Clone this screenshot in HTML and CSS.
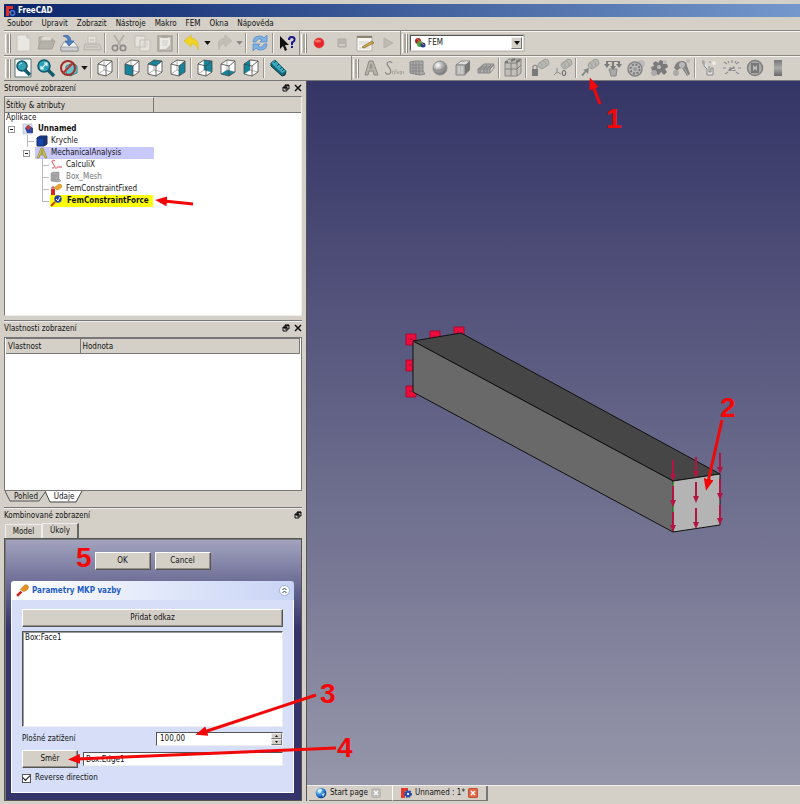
FILE: index.html
```html
<!DOCTYPE html>
<html lang="cs">
<head>
<meta charset="utf-8">
<title>FreeCAD</title>
<link rel="stylesheet" href="styles.css">
</head>
<body>
<svg class="defs" aria-hidden="true">
  <defs>
    <radialGradient id="ball" cx=".35" cy=".3" r=".7"><stop offset="0" stop-color="#fff"/><stop offset=".5" stop-color="#aaa"/><stop offset="1" stop-color="#777"/></radialGradient>
    <radialGradient id="globe" cx=".35" cy=".3" r=".7"><stop offset="0" stop-color="#d8f2ff"/><stop offset=".5" stop-color="#3b91df"/><stop offset="1" stop-color="#0c3b94"/></radialGradient>
    <linearGradient id="ramp" x1="0" y1="0" x2="0" y2="1"><stop offset="0" stop-color="#777"/><stop offset=".5" stop-color="#aaa"/><stop offset="1" stop-color="#686868"/></linearGradient>
    <marker id="tip" viewBox="0 0 12 10" refX="3" refY="5" markerWidth="12" markerHeight="10" markerUnits="userSpaceOnUse" orient="auto"><path d="M12 5L0 0V10Z" fill="#f20808"/></marker>
    <symbol id="wire" viewBox="0 0 20 20"><path d="M3 6L9 2L17 3V14L11 18L3 16Z" fill="#fff"/><path d="M9 2V12L3 16M9 12L17 14" stroke="#999" stroke-width=".8" fill="none"/></symbol>
    <symbol id="edges" viewBox="0 0 20 20"><path d="M3 6L9 2L17 3V14L11 18L3 16ZM3 6L11 8L17 3M11 8V18" stroke="#444" stroke-width=".8" fill="none" stroke-linejoin="round"/></symbol>
    <symbol id="roller" viewBox="0 0 20 20"><path d="M9 5L15 1Q19 1 19 5Q19 7 17 8L12 11Q8 10 8 7Z" fill="#b8b8b3" stroke="#95938f" stroke-width=".8"/><path d="M10 5Q13 6 12 10M13 3Q16 4 16 8" stroke="#999" fill="none" stroke-width=".7"/></symbol>
    <symbol id="float" viewBox="0 0 8 8"><path d="M3 1H7V5H3ZM1 3H5V7H1Z" fill="#d4d0c8" stroke="#111"/><path d="M3 1.5H7M1 3.5H5" stroke="#111" stroke-width="1.4"/></symbol>
    <symbol id="close" viewBox="0 0 8 8"><path d="M1 1L7 7M7 1L1 7" stroke="#111" stroke-width="1.5"/></symbol>
    <symbol id="pin" viewBox="0 0 12 12"><path d="M1 11L5 7" stroke="#c8241c" stroke-width="2.4"/><path d="M4 5L8 1Q11 0 11.500 3Q11 6 7 7Z" fill="#e99223" stroke="#c27a1d" stroke-width=".6"/></symbol>
  </defs>
</svg>
<div class="app">
  <header>
    <div class="titlebar">
      <svg width="12" height="12" viewBox="0 0 12 12"><path d="M2 1H9V4H5V6H7V8H5V11H2Z" fill="#e0302d"/><circle cx="8.500" cy="8" r="2.200" fill="none" stroke="#4b76ce" stroke-width="1.500"/></svg>
      <h1>FreeCAD</h1>
    </div>
    <nav class="menubar">
      <button>Soubor</button><button>Upravit</button><button>Zobrazit</button><button>Nástroje</button><button>Makro</button><button>FEM</button><button>Okna</button><button>Nápověda</button>
    </nav>
    <div class="toolrow">
      <div class="toolbar">
        <span class="grip"></span>
        <button class="tool" aria-label="Nový"><svg viewBox="0 0 20 20"><path d="M4 2H14L17 5V18H4Z" fill="#e9e7e1" stroke="#c4c1b9" stroke-width=".8"/><path d="M14 2V5H17" fill="none" stroke="#bbb"/></svg></button>
        <button class="tool" aria-label="Otevřít"><svg viewBox="0 0 20 20"><path d="M3 15V4H8L10 6H17V9" fill="#b8b6ae" stroke="#aaa79f"/><path d="M6 4H15V10H5Z" fill="#dedbd4"/><path d="M5 8H19L16 16H2Z" fill="#b5b2aa" stroke="#a4a198"/></svg></button>
        <button class="tool" aria-label="Uložit"><svg viewBox="0 0 20 20"><path d="M5 9H15L19 14V18H2V14Z" fill="#eeeeec" stroke="#85888b" stroke-width=".8"/><path d="M2 14H19V18H2Z" fill="#cbcdd0" stroke="#85888b" stroke-width=".6"/><path d="M4 3Q11 0 12 8H15L10 13L6 8H9Q9 4 4 3Z" fill="#4d83c6" stroke="#2d5691" stroke-width=".6"/></svg></button>
        <button class="tool" aria-label="Tisk"><svg viewBox="0 0 20 20"><path d="M6 3H14V10H6Z" fill="#e2dfd8" stroke="#c4c1b9"/><path d="M3 11H17L19 14V17H2V14Z" fill="#cfccc5" stroke="#b5b2aa"/><path d="M4 14H16M8 7H12" stroke="#b8b5ad" fill="none"/></svg></button>
        <span class="sep"></span>
        <button class="tool" aria-label="Vyjmout"><svg viewBox="0 0 20 20"><path d="M5 2L12 13M15 2L8 13" stroke="#b5b2aa" stroke-width="2"/><circle cx="6" cy="15" r="2.700" fill="none" stroke="#8d8b86" stroke-width="1.700"/><circle cx="14" cy="15" r="2.700" fill="none" stroke="#8d8b86" stroke-width="1.700"/></svg></button>
        <button class="tool" aria-label="Kopírovat"><svg viewBox="0 0 20 20"><path d="M3 3H13V14H3ZM8 7H18V18H8Z" fill="#e5e2dc" stroke="#c2bfb8"/><path d="M10 10H16M10 12H16M10 14H15" stroke="#d2cfc9"/></svg></button>
        <button class="tool" aria-label="Vložit"><svg viewBox="0 0 20 20"><path d="M3 3H17V18H3Z" fill="#c5c2ba" stroke="#a4a199" stroke-width="1.500"/><path d="M5 5H15V16H5Z" fill="#ebe9e4"/><path d="M7 2H13V5H7Z" fill="#aaa79f"/><path d="M7 8H13M7 10H13M7 12H12" stroke="#d0cdc6"/><path d="M11 16L15 12V16Z" fill="#bbb"/></svg></button>
        <span class="sep"></span>
        <button class="tool" aria-label="Zpět"><svg viewBox="0 0 20 20"><path d="M2 8L9 2V5Q18 6 16 17Q15 10 9 11V14Z" fill="#f1d522" stroke="#d9bb28" stroke-width=".7"/></svg></button>
        <button class="drop" aria-label="Kroky zpět"><svg viewBox="0 0 8 5"><path d="M0 0H8L4 5Z"/></svg></button>
        <button class="tool" aria-label="Znovu"><svg viewBox="0 0 20 20"><path d="M18 8L11 2V5Q2 6 5 17Q6 10 11 11V14Z" fill="#c1beb6" stroke="#b8b5ad" stroke-width=".7"/></svg></button>
        <button class="drop off" aria-label="Kroky vpřed"><svg viewBox="0 0 8 5"><path d="M0 0H8L4 5Z"/></svg></button>
        <span class="sep"></span>
        <button class="tool" aria-label="Obnovit"><svg viewBox="0 0 20 20"><path d="M3 9Q3 3 10 3Q13 3 14 5L17 2V9H10L12 7Q8 4 6 9ZM17 11Q17 17 10 17Q7 17 6 15L3 18V11H10L8 13Q12 16 14 11Z" fill="#7fb2e4" stroke="#4c84c2" stroke-width=".7"/></svg></button>
        <span class="sep"></span>
        <button class="tool" aria-label="Co je to?"><svg viewBox="0 0 20 20"><path d="M3 3V16L6 13L8 18L10 17L8 12H12Z" fill="#111"/><path d="M12 7Q12 4 14.500 4Q18 4 17.500 7Q17 9 15 9.500V12M15 13V15" fill="none" stroke="#16168b" stroke-width="2"/></svg></button>
      </div>
      <div class="toolbar">
        <span class="grip"></span>
        <button class="tool" aria-label="Nahrát makro"><svg viewBox="0 0 20 20"><circle cx="10" cy="10" r="5" fill="#e52525" stroke="#d04444" stroke-width=".6"/><ellipse cx="9" cy="8" rx="3" ry="1.500" fill="#f36b61"/></svg></button>
        <button class="tool" aria-label="Zastavit"><svg viewBox="0 0 20 20"><path d="M6 6H14V14H6Z" fill="#b8b5ae" stroke="#b0ada6"/><path d="M7 12H13" stroke="#ddd"/></svg></button>
        <button class="tool" aria-label="Makra"><svg viewBox="0 0 20 20"><path d="M2 3H17V18H2Z" fill="#f6f5ef" stroke="#b1afa8"/><path d="M2 3H17V5H2Z" fill="#8b826d"/><path d="M4 9H14M4 11H12M4 15H15" stroke="#d0d0cc"/><path d="M7 14L17 8L19 10L9 15Z" fill="#d5a540" stroke="#705d32" stroke-width=".6"/></svg></button>
        <button class="tool" aria-label="Spustit"><svg viewBox="0 0 20 20"><path d="M6 5L15 10L6 15Z" fill="#bebbb3" stroke="#b5b2aa"/></svg></button>
      </div>
      <div class="toolbar last">
        <span class="grip"></span>
        <div class="combo">
          <svg width="12" height="12" viewBox="0 0 12 12"><circle cx="4" cy="4" r="3" fill="#a72b25"/><circle cx="6" cy="7" r="3" fill="#48a536"/><circle cx="9" cy="8" r="2.500" fill="#233e91"/><path d="M3 2L10 8" stroke="#d67b54"/></svg>
          <select aria-label="Pracovní prostředí"><option>FEM</option></select>
          <span class="arrow"></span>
        </div>
      </div>
    </div>
    <div class="toolrow">
      <div class="toolbar views">
        <span class="grip"></span>
        <button class="tool" aria-label="Zobrazit vše"><svg viewBox="0 0 20 20"><path d="M2 1H18V19H2Z" fill="#fff" stroke="#57777b"/><path d="M12 12L17 17" stroke="#155b6e" stroke-width="3.500"/><circle cx="9" cy="8" r="5" fill="#36a1b4" stroke="#11586b" stroke-width="1.500"/><path d="M6 7Q7 5 9 5" stroke="#baf1f2" fill="none"/></svg></button>
        <button class="tool" aria-label="Zobrazit výběr"><svg viewBox="0 0 20 20"><path d="M12 12L18 18" stroke="#155b6e" stroke-width="3.500"/><circle cx="8" cy="8" r="6" fill="#2fa0b6" stroke="#11586b" stroke-width="1.500"/><path d="M5 11L11 5M8 5H11V8M5 8V11H8" stroke="#e9ffff" fill="none" stroke-width="1.200"/></svg></button>
        <button class="tool" aria-label="Styl zobrazení"><svg viewBox="0 0 20 20"><path d="M7 8L14 5L18 8V15L11 18L7 15Z" fill="#65c3cc" stroke="#38818b"/><circle cx="9" cy="10" r="7" fill="none" stroke="#9c302a" stroke-width="2"/><path d="M4 15L14 5" stroke="#b9332b" stroke-width="2"/></svg></button>
        <button class="drop" aria-label="Další styly"><svg viewBox="0 0 8 5"><path d="M0 0H8L4 5Z"/></svg></button>
        <span class="sep"></span>
        <button class="tool" aria-label="Axonometrie"><svg viewBox="0 0 20 20"><use href="#wire"/><use href="#edges"/></svg></button>
        <span class="sep"></span>
        <button class="tool" aria-label="Zepředu"><svg viewBox="0 0 20 20"><use href="#wire"/><path class="face" d="M3 6L11 8V18L3 16Z"/><use href="#edges"/></svg></button>
        <button class="tool" aria-label="Shora"><svg viewBox="0 0 20 20"><use href="#wire"/><path class="face" d="M3 6L9 2L17 3L11 8Z"/><use href="#edges"/></svg></button>
        <button class="tool" aria-label="Zprava"><svg viewBox="0 0 20 20"><use href="#wire"/><path class="face" d="M11 8L17 3V14L11 18Z"/><use href="#edges"/></svg></button>
        <span class="sep"></span>
        <button class="tool" aria-label="Zezadu"><svg viewBox="0 0 20 20"><use href="#wire"/><path class="face" d="M9 2L17 3V14L9 12Z"/><use href="#edges"/></svg></button>
        <button class="tool" aria-label="Zdola"><svg viewBox="0 0 20 20"><use href="#wire"/><path class="face" d="M3 16L9 12L17 14L11 18Z"/><use href="#edges"/></svg></button>
        <button class="tool" aria-label="Zleva"><svg viewBox="0 0 20 20"><use href="#wire"/><path class="face" d="M3 6L9 2V12L3 16Z"/><use href="#edges"/></svg></button>
        <span class="sep"></span>
        <button class="tool" aria-label="Měřit"><svg viewBox="0 0 20 20"><path d="M3 5L7 2L18 13L17 17L14 18L3 8Z" fill="#13687b" stroke="#083743"/><path d="M3 5L7 2L18 13L14 15Z" fill="#36a9bc"/><path d="M6 5L8 3M9 8L11 6M12 11L14 9M14 13L16 11" stroke="#0b4553"/></svg></button>
      </div>
      <div class="toolbar last">
        <span class="grip"></span>
        <button class="tool" aria-label="Analýza"><svg viewBox="0 0 20 20"><path d="M4 17L8 3H12L17 17H13L12 13H8L7 17ZM9 10H11L10 6Z" fill="#b5b2aa" stroke="#8e8c86"/></svg></button>
        <button class="tool" aria-label="Řešič"><svg viewBox="0 0 20 20"><path d="M8 5Q7 3 4.500 4Q2 5 4 8L6 10.500Q8 15 5 16Q2 17 1.500 14" fill="none" stroke="#8d8b86" stroke-width="1.300"/><path d="M8.500 13H10.500V16H8.500ZM12 11V16M13 13L14 16L15 13M18 16H16V13.500H18V15H16M19.500 16V13" fill="none" stroke="#a09d96" stroke-width=".7"/></svg></button>
        <button class="tool" aria-label="Síť"><svg viewBox="0 0 20 20"><path d="M3 4L8 3H16V13L18 16L13 17L3 15Z" fill="#aaa" stroke="#888"/><path d="M3 7H16M3 10H16M3 13H16M6 4V16M9 4V17M12 4V17" stroke="#828282" stroke-width=".8"/></svg></button>
        <button class="tool" aria-label="Materiál"><svg viewBox="0 0 20 20"><circle cx="10" cy="10" r="7" fill="url(#ball)" stroke="#919191"/><path d="M3 11Q10 15 17 8" fill="none" stroke="#888"/></svg></button>
        <button class="tool" aria-label="Uzly"><svg viewBox="0 0 20 20"><path d="M3 7L8 3H17L13 7Z" fill="#ddd" stroke="#888"/><path d="M3 7H12V17H3Z" fill="#b8b8b8" stroke="#888"/><path d="M12 7L17 3V12L12 17Z" fill="#777"/><path d="M6 8V16M9 8V16M10 6L14 3" stroke="#ddd"/></svg></button>
        <button class="tool" aria-label="Skořepina"><svg viewBox="0 0 20 20"><path d="M2 11L8 6H18L14 11V15H2Z" fill="#aaa" stroke="#888"/><path d="M2 11H14L18 7V10L14 15M5 9H16M7 7L4 11V15M11 7L8 11V15M15 7L11 11V15" fill="none" stroke="#828282" stroke-width=".8"/></svg></button>
        <span class="sep"></span>
        <button class="tool" aria-label="Skupina uzlů"><svg viewBox="0 0 20 20"><path d="M2 4L6 1H18V15L14 18H2Z" fill="#c1bfb8" stroke="#888"/><path d="M2 5H14L18 1M14 5V18M8 5V18M2 11H14L18 7" fill="none" stroke="#808080"/><path d="M2 4H5M8 3L12 1M13 4L17 2" stroke="#777" stroke-width="2"/></svg></button>
        <span class="sep"></span>
        <button class="tool" aria-label="Pevná vazba"><svg viewBox="0 0 20 20"><use href="#roller"/><path d="M2 11H8V18H2Z" fill="#797979"/><path d="M3 11V8Q5 6 7 8V11" fill="none" stroke="#777"/></svg></button>
        <button class="tool" aria-label="Posunutí"><svg viewBox="0 0 20 20"><use href="#roller"/><path d="M4 10V14L1 17M4 14L8 16" fill="none" stroke="#888"/><ellipse cx="11" cy="15" rx="1.700" ry="2.500" fill="none" stroke="#777" stroke-width="1.200"/></svg></button>
        <span class="sep"></span>
        <button class="tool" aria-label="Síla"><svg viewBox="0 0 20 20"><use href="#roller"/><path d="M1 17L5 13L3 12L9 10L8 16L6 14L3 18Z" fill="#858585"/></svg></button>
        <button class="tool" aria-label="Tlak"><svg viewBox="0 0 20 20"><path d="M6 11H14L13 18H8Z" fill="#aaa" stroke="#888"/><path d="M3 3V6H1L4 10L7 6H5V4H9V8H7L10 12L13 8H11V4H15V6H13L16 10L19 6H17V3Z" fill="#7b7b7b"/></svg></button>
        <button class="tool" aria-label="Ložisko"><svg viewBox="0 0 20 20"><circle cx="15" cy="6" r="4" fill="#bbb"/><circle cx="9" cy="11" r="7" fill="#bbb" stroke="#858585" stroke-width="1.500"/><circle cx="9" cy="11" r="4.500" fill="none" stroke="#777" stroke-width="2" stroke-dasharray="2 1.500"/><circle cx="9" cy="11" r="2" fill="#999"/></svg></button>
        <button class="tool" aria-label="Ozubené kolo"><svg viewBox="0 0 20 20"><path d="M4 5L7 3L9 5L11 2L14 3V6L18 6L19 9L16 11L18 14L15 17L12 14L10 17L7 16V13L3 13L2 9L5 8Z" fill="#7b7b7b"/><circle cx="10" cy="9" r="2" fill="#bbb"/><circle cx="5" cy="15" r="3" fill="#aaa"/><circle cx="16" cy="4" r="2" fill="#bbb"/></svg></button>
        <button class="tool" aria-label="Řemenice"><svg viewBox="0 0 20 20"><path d="M2 10Q4 2 11 3Q15 4 15 8L18 16L15 18L10 10Q7 10 5 13Z" fill="#818181"/><circle cx="10" cy="7" r="3" fill="#b8b8b8"/><circle cx="4" cy="15" r="3" fill="#aaa"/><circle cx="16" cy="3" r="2" fill="#bbb"/><path d="M12 10L16 17" stroke="#aaa"/></svg></button>
        <span class="sep"></span>
        <button class="tool" aria-label="Příčky"><svg viewBox="0 0 20 20"><path d="M5 5V8L8 11V17H14V10H12V14H10V8" fill="#ddd" stroke="#888"/><path d="M3 4H6M4 2V6M10 4H12" stroke="#999"/><circle cx="15" cy="5" r="2" fill="#eceae5"/></svg></button>
        <button class="tool" aria-label="Výpočet"><svg viewBox="0 0 20 20"><path d="M2 4L5 6M10 2V5M17 4L14 6M1 10H4M16 10H19M3 16L6 14M17 16L14 14M6 3L7 5M14 3L13 5" stroke="#909090" stroke-width="1.200"/><path d="M6 13L8 9L10 10L12 8L14 13Z" fill="#888"/><path d="M9 12L14 11" stroke="#ddd"/></svg></button>
        <button class="tool" aria-label="Výsledky"><svg viewBox="0 0 20 20"><circle cx="10" cy="10" r="7.500" fill="#aaa" stroke="#808080" stroke-width="1.500"/><path d="M6 5H14V15H6Z" fill="#787878"/><path d="M8 7L10 9L12 7V13L10 11L8 13Z" fill="#bbb"/></svg></button>
        <button class="tool" aria-label="Stupnice"><svg viewBox="0 0 20 20"><path d="M6 2H14V18H6Z" fill="url(#ramp)"/></svg></button>
      </div>
    </div>
  </header>
  <div class="main">
    <aside class="side">
      <section class="dock tree-dock">
        <div class="dock-title"><h2>Stromové zobrazení</h2><button aria-label="Uvolnit"><svg><use href="#float"/></svg></button><button aria-label="Zavřít"><svg><use href="#close"/></svg></button></div>
        <div class="tree">
          <div class="tree-head"><span>Štítky &amp; atributy</span></div>
          <ul>
            <li class="root">Aplikace</li>
            <li class="l1"><span class="toggle"></span><svg width="12" height="12" viewBox="0 0 12 12"><path d="M1 1H10V11H1Z" fill="#dce0ee" stroke="#9ba4ba" stroke-width=".5"/><path d="M3 5L6 2L11 5V10H5Z" fill="#304aa2"/><path d="M4 4L7 2L9 5L6 7Z" fill="#cf3a36"/></svg><b>Unnamed</b></li>
            <li class="l2"><svg width="12" height="12" viewBox="0 0 12 12"><path d="M1 3L4 1H11V9L8 11H1Z" fill="#1446a5" stroke="#142a65"/><path d="M1 3H8V11M8 3L11 1" stroke="#142a65" fill="none"/><path d="M8 3L11 1V9L8 11Z" fill="#23306e"/></svg><span>Krychle</span></li>
            <li class="l2 toggled"><span class="toggle"></span><span class="analysis"><svg width="12" height="12" viewBox="0 0 12 12"><path d="M1 11L5 1H7L11 11H9L8 8H4L3 11ZM5 7H7L6 3Z" fill="#d2c44a" stroke="#8f8a3c" stroke-width=".7"/></svg><span>MechanicalAnalysis</span></span></li>
            <li class="l3"><svg width="12" height="12" viewBox="0 0 12 12"><path d="M5 2Q2 0 2 3L4 6Q6 9 2 9M5 9H7M8 7V9M9 8H12" fill="none" stroke="#e04450"/></svg><span>CalculiX</span></li>
            <li class="l3 muted"><svg width="12" height="12" viewBox="0 0 12 12"><path d="M1 2L4 1H9V8L11 10L7 11L1 10Z" fill="#aaa" stroke="#888" stroke-width=".5"/><path d="M3 3V10M5 3V10M8 2V9M1 5H9M1 8H9" stroke="#999" stroke-width=".6"/></svg><span>Box_Mesh</span></li>
            <li class="l3"><svg width="12" height="12" viewBox="0 0 12 12"><path d="M1 6H5V12H1Z" fill="#d02a22"/><path d="M2 6V4H4V6" fill="none" stroke="#bd2824"/><path d="M5 4L9 1Q12 1 12 4L8 7Q5 7 5 4Z" fill="#eda62a" stroke="#d98a24" stroke-width=".6"/></svg><span>FemConstraintFixed</span></li>
            <li class="l3 end"><span class="force"><svg width="12" height="12" viewBox="0 0 12 12"><path d="M1 11L5 7" stroke="#ce3a17" stroke-width="2"/><circle cx="8" cy="4" r="3.700" fill="#233eae"/><path d="M6 4L8 6L10 2" fill="none" stroke="#fff"/></svg><b>FemConstraintForce</b></span></li>
          </ul>
        </div>
      </section>
      <section class="dock prop-dock">
        <div class="dock-title"><h2>Vlastnosti zobrazení</h2><button aria-label="Uvolnit"><svg><use href="#float"/></svg></button><button aria-label="Zavřít"><svg><use href="#close"/></svg></button></div>
        <div class="props"><table><thead><tr><th>Vlastnost</th><th>Hodnota</th></tr></thead></table></div>
        <div class="slant-tabs">
          <button class="back"><svg viewBox="0 0 42 12" preserveAspectRatio="none"><path d="M0 0L5 10H34L41 0" fill="#d4d0c8" stroke="#555"/></svg><span>Pohled</span></button>
          <button class="front"><svg viewBox="0 0 38 12" preserveAspectRatio="none"><path d="M0 0L5 11H31L37 0" fill="#fff" stroke="#444"/></svg><span>Údaje</span></button>
        </div>
      </section>
      <section class="dock combo-dock">
        <div class="dock-title"><h2>Kombinované zobrazení</h2><button aria-label="Uvolnit"><svg><use href="#float"/></svg></button></div>
        <div class="tabs"><button>Model</button><button class="active">Úkoly</button></div>
        <div class="tasks">
          <div class="actions"><button class="btn">OK</button><button class="btn">Cancel</button></div>
          <form class="card">
            <div class="card-head"><svg width="13" height="13" viewBox="0 0 12 12"><use href="#pin"/></svg><h3>Parametry MKP vazby</h3><button type="button" class="fold" aria-label="Sbalit"><svg width="11" height="11" viewBox="0 0 11 11"><circle cx="5.500" cy="5.500" r="5" fill="#fff" stroke="#a3add0"/><path d="M3.500 5L5.500 3L7.500 5M3.500 8L5.500 6L7.500 8" fill="none" stroke="#26417e"/></svg></button></div>
            <div class="card-body">
              <button type="button" class="btn wide">Přidat odkaz</button>
              <ul class="refs"><li>Box:Face1</li></ul>
              <div class="row load"><label for="load">Plošné zatížení</label><div class="spin"><input id="load" type="text" value="100,00"><span class="steps"><button type="button" aria-label="Zvýšit"><svg viewBox="0 0 5 3"><path d="M0 3L2.500 0L5 3Z"/></svg></button><button type="button" aria-label="Snížit"><svg viewBox="0 0 5 3"><path d="M0 0L2.500 3L5 0Z"/></svg></button></span></div></div>
              <div class="row"><button type="button" class="btn dir">Směr</button><input class="edge" type="text" aria-label="Směr" value="Box:Edge1"></div>
              <label class="check"><input type="checkbox" checked>Reverse direction</label>
            </div>
          </form>
        </div>
      </section>
    </aside>
    <main class="work">
      <div class="viewport">
        <svg viewBox="307 81 493 704" role="img" aria-label="Model nosníku">
          <g fill="#ef0c3d" stroke="#a50a32">
            <path d="M406 334H416V345H406ZM430 331H440V341H430ZM454 327H464V337H454ZM406 360H416V371H406ZM406 386H416V397H406Z"/>
          </g>
          <g stroke="#111" stroke-linejoin="round">
            <path d="M413 341L461 333L720 474L673 481Z" fill="#464646"/>
            <path d="M413 341L673 481V532L413 392Z" fill="#696969"/>
            <path d="M673 481L720 474V525L673 532Z" fill="#b4b4b4"/>
          </g>
          <path d="M673 482V531" stroke="#3dbb3d"/>
          <path d="M409 339H413V345M409 365H413M409 391H413M434 335V337M458 331V333" stroke="#8c1838" fill="none"/>
          <g fill="#b31442" stroke="#b31442">
            <path d="M673 460V475M696 457V472M720 453V468M673 486V501M696 482V497M720 479V494M673 512V527M696 508V523M720 505V520" stroke-width="2"/>
            <path d="M670 474H676L673 481ZM693 471H699L696 478ZM717 467H723L720 474ZM670 500H676L673 507ZM693 496H699L696 503ZM717 493H723L720 500ZM670 525H676L673 532ZM693 522H699L696 529ZM717 518H723L720 525Z" stroke="none"/>
          </g>
        </svg>
      </div>
      <div class="docs">
        <div class="doc"><svg width="12" height="12" viewBox="0 0 12 12"><circle cx="6" cy="6" r="5.300" fill="url(#globe)"/><path d="M3 3Q6 1 7 3L5 6L3 5ZM7 7L10 6L8 10Z" fill="#d5f1f6"/></svg><a href="#start">Start page</a><button aria-label="Zavřít Start page"><svg viewBox="0 0 10 10"><path d="M3 3L7 7M7 3L3 7" stroke="#fff" stroke-width="1.500"/></svg></button></div>
        <div class="doc current"><svg width="12" height="12" viewBox="0 0 12 12"><path d="M1 1H8V4H5V11H1Z" fill="#e23b2d"/><circle cx="8" cy="7" r="3" fill="#2848a7" stroke="#2848a7" stroke-width="2" stroke-dasharray="1.500 1"/><circle cx="8" cy="7" r="1.200" fill="#ddd"/></svg><a href="#unnamed">Unnamed : 1*</a><button aria-label="Zavřít Unnamed"><svg viewBox="0 0 10 10"><path d="M3 3L7 7M7 3L3 7" stroke="#fff" stroke-width="1.500"/></svg></button></div>
      </div>
    </main>
  </div>
  <svg class="notes" width="800" height="804" viewBox="0 0 800 804">
    <g stroke="#f20808" stroke-width="3">
      <path d="M600 104L593 86" marker-end="url(#tip)"/>
      <path d="M193 204L164 201" marker-end="url(#tip)"/>
      <path d="M722 420L708 482" marker-end="url(#tip)"/>
      <path d="M316 695L204 732" marker-end="url(#tip)"/>
      <path d="M336 748L77 759" marker-end="url(#tip)"/>
    </g>
    <g class="numbers">
      <text x="606" y="128">1</text><text x="720" y="417">2</text><text x="320" y="703">3</text><text x="337" y="757">4</text><text x="76" y="567">5</text>
    </g>
  </svg>
</div>
</body>
</html>
```
FILE: styles.css
```css
* { box-sizing: border-box; }
body { margin: 0; background: #d4d0c8; color: #111; font: 8px/12px "DejaVu Sans Condensed", "DejaVu Sans", sans-serif; }
button, input, select { font: inherit; color: inherit; margin: 0; padding: 0; border: 0; background: none; }
h1, h2, h3, ul { margin: 0; padding: 0; font: inherit; list-style: none; }
svg { display: block; flex: none; }
a { color: inherit; text-decoration: none; }
.defs { position: absolute; width: 0; height: 0; }
.app { position: relative; display: flex; flex-direction: column; min-height: 100vh; padding: 4px 0 3px 4px; overflow: hidden; }

.titlebar { display: flex; align-items: center; gap: 2px; height: 13px; background: linear-gradient(90deg, #0a246a, #7498cc); color: #fff; }
.titlebar h1 { font-weight: bold; }
.menubar { display: flex; height: 13px; gap: 9px; padding: 1px 3px 0; }
.menubar button { white-space: nowrap; }
.toolrow { display: flex; height: 25px; border-top: 1px solid #8b8881; box-shadow: inset 0 1px #f4f3f0; }
.toolbar { display: flex; align-items: center; height: 24px; padding-right: 1px; border-right: 1px solid #908d86; }
.toolbar.views { width: 348px; }
.toolbar.last { flex: 1; border-right: 0; }
.grip { width: 5px; height: 19px; margin: 0 1px; border: solid #fff; border-width: 0 1px; box-shadow: 1px 0 #8b8881, inset -2px 0 #aaa79f; flex: none; }
.tool { width: 23px; height: 22px; display: grid; place-items: center; flex: none; }
.tool svg { width: 20px; height: 20px; }
.drop { width: 9px; height: 20px; display: grid; place-items: center; }
.drop svg { width: 7px; height: 4px; }
.off { color: #888; }
.drop path, .steps path { fill: currentColor; }
.sep { width: 2px; height: 20px; margin: 0 1px; border-left: 1px solid #99968f; border-right: 1px solid #f4f3f0; flex: none; }
.face { fill: #16849a; }
.combo { display: flex; align-items: center; width: 114px; height: 16px; padding-left: 3px; background: #fff; border: 1px solid #555; border-right-color: #ddd; border-bottom-color: #ddd; box-shadow: 0 0 0 1px #bbb8b0; margin-left: 2px; }
.combo select { appearance: none; flex: 1; padding-left: 2px; }
.arrow { width: 11px; height: 12px; margin-right: 1px; background: #d4d0c8; border: 1px solid #777; border-left-color: #eee; border-top-color: #eee; display: grid; place-items: center; pointer-events: none; }
.arrow::after { content: ""; border: 3px solid transparent; border-top: 4px solid #111; border-bottom: 0; }

.main { flex: 1; display: flex; border-top: 1px solid #777; min-height: 0; }
.side { width: 302px; flex: none; display: flex; flex-direction: column; border-right: 3px solid #d4d0c8; padding-right: 1px; }
.dock { display: flex; flex-direction: column; }
.dock-title { display: flex; align-items: center; height: 15px; padding-top: 1px; gap: 4px; }
.dock-title h2 { flex: 1; }
.dock-title svg { width: 8px; height: 8px; }
.dock-title button { margin-bottom: 2px; }
.tree-dock { height: 235px; }
.tree { flex: 1; background: #fff; border: 1px solid #777; border-right-color: #eee; border-bottom-color: #eee; }
.tree-head { height: 16px; background: #d4d0c8; border-bottom: 1px solid #777; }
.tree-head span { display: block; width: 149px; height: 15px; padding: 2px 1px; border-right: 1px solid #777; border-top: 1px solid #eee; }
.tree li { display: flex; align-items: center; height: 12px; gap: 3px; }
.tree .root { padding-left: 1px; height: 10px; }
.tree .l1 { padding-left: 3px; gap: 4px; }
.tree .l1 svg { margin-left: 3px; }
.tree .l2 { padding-left: 31px; }
.tree .l2.toggled { padding-left: 18px; gap: 5px; }
.tree .l3 { padding-left: 45px; gap: 4px; }
.tree .l2:not(.toggled) { background: linear-gradient(#bbb, #bbb) 22px 6px / 7px 1px no-repeat, linear-gradient(#bbb, #bbb) 22px 0 / 1px 100% no-repeat; }
.tree .l3 { background: linear-gradient(#bbb, #bbb) 37px 6px / 7px 1px no-repeat, linear-gradient(#bbb, #bbb) 37px 0 / 1px 100% no-repeat; }
.tree .l3.end { background-size: 7px 1px, 1px 6px; }
.toggle { width: 7px; height: 7px; border: 1px solid #999; background: linear-gradient(#222, #222) center / 3px 1px no-repeat; flex: none; }
.analysis { display: flex; gap: 3px; width: 119px; background: #c9c8fb; padding-left: 1px; }
.force { display: flex; gap: 5px; width: 103px; background: #ffff0a; }
.muted { color: #777; }

.prop-dock { margin-top: 4px; border-top: 1px solid #777; height: 184px; box-shadow: inset 0 1px #eee; }
.props { flex: 1; margin: 1px 0 0; padding: 0 1px; border: 1px solid #777; background: #fff; }
.props table { width: 100%; border-collapse: collapse; table-layout: fixed; background: #d4d0c8; }
.props th { text-align: left; font-weight: normal; height: 15px; padding: 1px 2px 0; border: 1px solid #777; border-left: 0; }
.props th:first-child { width: 74px; }
.slant-tabs { display: flex; height: 13px; padding-left: 1px; }
.slant-tabs button { position: relative; width: 42px; height: 12px; }
.slant-tabs button svg { position: absolute; inset: 0; width: 100%; height: 100%; }
.slant-tabs .front { width: 38px; margin-left: -2px; }
.slant-tabs span { position: relative; }

.combo-dock { flex: 1; margin-top: 3px; border-top: 1px solid #777; box-shadow: inset 0 1px #eee; }
.tabs { display: flex; height: 15px; padding-left: 1px; }
.tabs button { width: 37px; border: 1px solid #eee; border-bottom: 0; margin-top: 1px; }
.tabs .active { border-right: 2px solid #666; margin-top: 0; }
.tasks { flex: 1; padding: 13px 7px 7px 6px; border: 1px solid #555; box-shadow: inset 1px 1px #777; background: linear-gradient(#a4a4c0, #34346a 90px); display: flex; flex-direction: column; }
.actions { display: flex; gap: 4px; justify-content: center; margin-bottom: 11px; }
.btn { height: 18px; width: 56px; background: #d4d0c8; border: 1px solid #fff; border-right-color: #555; border-bottom-color: #555; box-shadow: inset -1px -1px #969289; }
.card { flex: 1; display: flex; flex-direction: column; }
.card-head { display: flex; align-items: center; gap: 3px; height: 19px; padding: 0 4px 0 5px; border-radius: 3px 3px 0 0; background: linear-gradient(90deg, #fff, #c8d4f5); color: #215dc6; font-weight: bold; }
.card-head h3 { flex: 1; }
.card-body { flex: 1; padding: 9px 10px 8px; background: #d6dff7; border: 1px solid #fff; border-top: 0; display: flex; flex-direction: column; }
.wide { width: 100%; }
.refs { flex: 1; margin: 4px 0; padding: 0 2px; background: #fff; border: 1px solid #555; border-right-color: #eee; border-bottom-color: #eee; box-shadow: inset 1px 1px #999; }
.row { display: flex; align-items: center; gap: 5px; height: 18px; }
.load { height: 15px; margin-bottom: 4px; }
.load label { flex: 1; }
.spin { display: flex; width: 127px; height: 14px; background: #fff; border: 1px solid #555; border-right-color: #eee; border-bottom-color: #eee; }
.spin input { flex: 1; min-width: 0; padding-left: 3px; }
.steps { width: 11px; display: grid; grid-template-rows: 1fr 1fr; }
.steps button { background: #d4d0c8; border: 1px solid #777; border-left-color: #eee; border-top-color: #eee; display: grid; place-items: center; }
.steps svg { width: 3px; height: 2px; }
.dir { flex: none; }
.edge { flex: 1; min-width: 0; height: 14px; padding-left: 2px; background: #fff; border: 1px solid #555; border-right-color: #eee; border-bottom-color: #eee; }
.check { display: flex; align-items: center; gap: 4px; margin-top: 4px; }
.check input { appearance: none; width: 9px; height: 9px; background: #fff; border: 1px solid #555; display: grid; place-items: center; }
.check input:checked::after { content: ""; width: 6px; height: 3px; margin-bottom: 2px; border: solid #111; border-width: 0 0 1px 1px; transform: rotate(-45deg); }

.work { flex: 1; min-width: 0; display: flex; flex-direction: column; border-left: 1px solid #555; }
.viewport { flex: 1; min-height: 0; background: linear-gradient(#343466, #9696aa); }
.viewport svg { width: 100%; height: 100%; }
.docs { display: flex; height: 16px; border-top: 1px solid #eee; padding-left: 2px; }
.doc { display: flex; align-items: center; gap: 3px; width: 83px; padding-left: 6px; border-bottom: 1px solid #777; white-space: nowrap; }
.doc.current { width: 96px; border-right: 2px solid #777; border-left: 1px solid #fff; padding-left: 7px; }
.doc button { width: 10px; height: 10px; border-radius: 2px; background: #bbb9b3; }
.doc.current button { background: #e26749; box-shadow: inset 0 0 0 1px #bd5038; }
.notes { position: absolute; top: 0; left: 0; pointer-events: none; }
.numbers { fill: #f20808; font: bold 28px/1 "Liberation Sans", sans-serif; }
```
